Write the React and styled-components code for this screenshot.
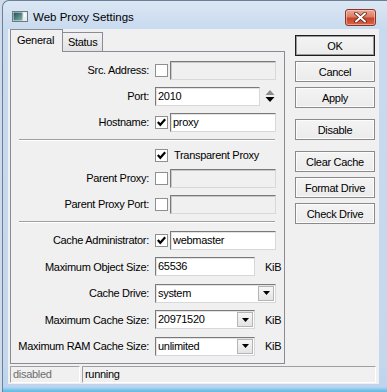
import React from 'react';
import styled, { createGlobalStyle } from 'styled-components';

const Global = createGlobalStyle`
  html, body { margin: 0; padding: 0; background: #cfdbe8; }
  body { font-family: "Liberation Sans", Arial, sans-serif; font-size: 11px; letter-spacing: -0.3px; color: #000; }
  * { box-sizing: border-box; }
`;

const Window = styled.div`
  margin-left: 2px;
  width: 385px;
  height: 392px;
  display: flex;
  flex-direction: column;
  background: linear-gradient(#dbe7f4 0px, #c8daef 28px, #c4d7ed 360px, #bcd4ee 386px, #63bfe8 390px);
  border-left: 1px solid #6d7f94;
  border-top: 1px solid #6d7f94;
  border-top-left-radius: 7px;
  overflow: hidden;
`;

const TitleBar = styled.div`
  height: 28px;
  flex: none;
  display: flex;
  align-items: center;
  padding: 3px 11px 0 9px;
`;

const Title = styled.div`
  margin-left: 5px;
  font-size: 11.5px;
  letter-spacing: 0;
  color: #000;
  flex: 1;
  padding-top: 1px;
`;

const CloseBtn = styled.div`
  width: 31px;
  height: 17px;
  margin-top: 2px;
  border: 1px solid #8a3528;
  border-radius: 3px;
  background: linear-gradient(#eaa896 0%, #dd7d66 45%, #c8432b 55%, #d5674c 100%);
  display: flex;
  align-items: center;
  justify-content: center;
  box-shadow: inset 0 0 0 1px rgba(255, 220, 210, 0.5);
`;

const Client = styled.div`
  flex: 1;
  margin: 0 8px 8px 5px;
  background: #f0f0f0;
  display: flex;
  flex-direction: column;
`;

const Top = styled.div`
  display: flex;
  align-items: flex-start;
`;

const TabArea = styled.div`
  margin-left: 2px;
  width: 275px;
  display: flex;
  flex-direction: column;
`;

const TabBar = styled.div`
  display: flex;
  align-items: flex-end;
  height: 23px;
  margin-bottom: -1px;
  position: relative;
  z-index: 1;
`;

const Tab = styled.div`
  width: ${p => p.$w}px;
  height: ${p => (p.$active ? 23 : 20)}px;
  padding: ${p => (p.$active ? '4px 0 0 6px' : '3px 0 0 5px')};
  border: 1px solid #898c95;
  border-bottom: ${p => (p.$active ? 'none' : '1px solid #898c95')};
  margin-left: ${p => (p.$active ? 0 : -1)}px;
  background: ${p => (p.$active ? '#f0f0f0' : 'linear-gradient(#f2f2f2, #e3e3e3)')};
  font-size: 11px;
  line-height: 13px;
`;

const Panel = styled.div`
  border: 1px solid #898c95;
  padding: 5px 0 3px 0;
  background: #f0f0f0;
`;

const FieldRow = styled.div`
  display: grid;
  grid-template-columns: 139px 121px;
  column-gap: 5px;
  align-items: center;
  height: ${p => p.$h || 26}px;
`;

const Label = styled.div`
  text-align: right;
  padding-right: 1px;
  white-space: nowrap;
`;

const Control = styled.div`
  display: flex;
  align-items: center;
`;

const Check = styled.div`
  width: 13px;
  height: 13px;
  flex: none;
  background: #fff;
  border: 1px solid #8e8f8f;
  margin-right: 2px;
  display: flex;
  align-items: center;
  justify-content: center;
`;

const Input = styled.div`
  height: 19px;
  width: ${p => (p.$w ? `${p.$w}px` : 'auto')};
  flex: ${p => (p.$w ? 'none' : 1)};
  background: ${p => (p.$disabled ? '#f0f0f0' : '#fff')};
  border: 1px solid;
  border-color: #7a7a7a #d8d8d8 #d8d8d8 #7a7a7a;
  box-shadow: inset 1px 1px 0 ${p => (p.$disabled ? '#c8c8c8' : '#e3e3e3')};
  padding: 0 2px;
  line-height: 17px;
  white-space: nowrap;
`;

const Select = styled(Input)`
  display: flex;
  align-items: center;
  justify-content: space-between;
  padding: 0 1px 0 2px;
`;

const DropBtn = styled.div`
  width: 16px;
  height: 15px;
  border: 1px solid #b5b5b5;
  background: linear-gradient(#f6f6f6, #e4e4e4);
  display: flex;
  align-items: center;
  justify-content: center;
`;

const Unit = styled.span`
  margin-left: 10px;
`;

const CheckLabel = styled.span`
  margin-left: 4px;
`;

const Separator = styled.div`
  margin: 4px 9px 4px 8px;
  border-top: 1px solid #a0a0a0;
  border-bottom: 1px solid #ffffff;
`;

const ButtonCol = styled.div`
  margin-left: 10px;
  width: 80px;
  padding-top: 6px;
  display: flex;
  flex-direction: column;
`;

const Button = styled.div`
  height: 21px;
  margin-top: ${p => p.$gap}px;
  border: 1px solid ${p => (p.$default ? '#1e1e1e' : '#8a8a8a')};
  background: linear-gradient(#f4f4f4, #ebebeb);
  box-shadow: inset 0 0 0 1px ${p => (p.$default ? '#9a9a9a' : '#fcfcfc')};
  display: flex;
  align-items: center;
  justify-content: center;
  font-size: 11px;
`;

const StatusBar = styled.div`
  margin-top: auto;
  display: flex;
  gap: 2px;
  padding: 0 3px 1px 2px;
  height: 18px;
`;

const StatusCell = styled.div`
  height: 17px;
  width: ${p => (p.$w ? `${p.$w}px` : 'auto')};
  flex: ${p => (p.$w ? 'none' : 1)};
  border: 1px solid;
  border-color: #a0a0a0 #ffffff #ffffff #a0a0a0;
  color: ${p => (p.$dim ? '#6d6d6d' : '#000')};
  padding-left: 2px;
  line-height: 15px;
`;

const Spinner = () => (
  <svg width="10" height="14" viewBox="0 0 10 14" style={{ marginLeft: 5, flex: 'none' }}>
    <path d="M5 1 L9.5 6 L0.5 6 Z" fill="#8c8c8c" />
    <path d="M0.5 8 L9.5 8 L5 13 Z" fill="#000" />
  </svg>
);

const Tick = () => (
  <svg width="9" height="9" viewBox="0 0 9 9">
    <path d="M0.8 4 L3.3 6.8 L8.2 1.2" fill="none" stroke="#000" strokeWidth="2.2" />
  </svg>
);

const Arrow = () => (
  <svg width="7" height="4" viewBox="0 0 7 4">
    <path d="M0 0 L7 0 L3.5 4 Z" fill="#000" />
  </svg>
);

const AppIcon = () => (
  <svg width="16" height="11" viewBox="0 0 16 11">
    <rect x="0.5" y="0.5" width="15" height="10" fill="#e8ecee" stroke="#6f7a80" />
    <rect x="1.5" y="1.5" width="9" height="8" fill="url(#g1)" />
    <rect x="12" y="2" width="1.5" height="4" fill="#ffffff" />
    <defs>
      <linearGradient id="g1" x1="0" y1="0" x2="1" y2="1">
        <stop offset="0" stopColor="#1f4d55" />
        <stop offset="1" stopColor="#7fb6ad" />
      </linearGradient>
    </defs>
  </svg>
);

const CloseX = () => (
  <svg width="13" height="11" viewBox="0 0 13 11">
    <path d="M2 1.5 L11 9.5 M11 1.5 L2 9.5" stroke="#5a1e14" strokeWidth="3.6" strokeLinecap="round" />
    <path d="M2 1.5 L11 9.5 M11 1.5 L2 9.5" stroke="#ffffff" strokeWidth="2" strokeLinecap="round" />
  </svg>
);

const CheckField = ({ label, checked, value, disabled }) => (
  <FieldRow>
    <Label>{label}</Label>
    <Control>
      <Check>{checked && <Tick />}</Check>
      <Input $disabled={disabled}>{value}</Input>
    </Control>
  </FieldRow>
);

const SelectField = ({ label, value, w, unit, h }) => (
  <FieldRow $h={h}>
    <Label>{label}</Label>
    <Control>
      <Select $w={w}>
        <span>{value}</span>
        <DropBtn><Arrow /></DropBtn>
      </Select>
      {unit && <Unit>{unit}</Unit>}
    </Control>
  </FieldRow>
);

export default function App() {
  return (
    <>
      <Global />
      <Window>
        <TitleBar>
          <AppIcon />
          <Title>Web Proxy Settings</Title>
          <CloseBtn><CloseX /></CloseBtn>
        </TitleBar>
        <Client>
          <Top>
            <TabArea>
              <TabBar>
                <Tab $active $w={53}>General</Tab>
                <Tab $w={41}>Status</Tab>
              </TabBar>
              <Panel>
                <CheckField label="Src. Address:" disabled />
                <FieldRow>
                  <Label>Port:</Label>
                  <Control>
                    <Input $w={105}>2010</Input>
                    <Spinner />
                  </Control>
                </FieldRow>
                <CheckField label="Hostname:" checked value="proxy" />
                <Separator />
                <FieldRow $h={20}>
                  <span />
                  <Control>
                    <Check><Tick /></Check>
                    <CheckLabel>Transparent Proxy</CheckLabel>
                  </Control>
                </FieldRow>
                <CheckField label="Parent Proxy:" disabled />
                <CheckField label="Parent Proxy Port:" disabled />
                <Separator />
                <FieldRow $h={26.5}>
                  <Label>Cache Administrator:</Label>
                  <Control>
                    <Check><Tick /></Check>
                    <Input>webmaster</Input>
                  </Control>
                </FieldRow>
                <FieldRow $h={26.5}>
                  <Label>Maximum Object Size:</Label>
                  <Control>
                    <Input $w={100}>65536</Input>
                    <Unit>KiB</Unit>
                  </Control>
                </FieldRow>
                <SelectField label="Cache Drive:" value="system" h={26.5} />
                <SelectField label="Maximum Cache Size:" value="20971520" w={100} unit="KiB" h={26.5} />
                <SelectField label="Maximum RAM Cache Size:" value="unlimited" w={100} unit="KiB" h={26.5} />
              </Panel>
            </TabArea>
            <ButtonCol>
              <Button $default $gap={0}>OK</Button>
              <Button $gap={5}>Cancel</Button>
              <Button $gap={5}>Apply</Button>
              <Button $gap={11}>Disable</Button>
              <Button $gap={11}>Clear Cache</Button>
              <Button $gap={5}>Format Drive</Button>
              <Button $gap={5}>Check Drive</Button>
            </ButtonCol>
          </Top>
          <StatusBar>
            <StatusCell $w={70} $dim>disabled</StatusCell>
            <StatusCell>running</StatusCell>
          </StatusBar>
        </Client>
      </Window>
    </>
  );
}
